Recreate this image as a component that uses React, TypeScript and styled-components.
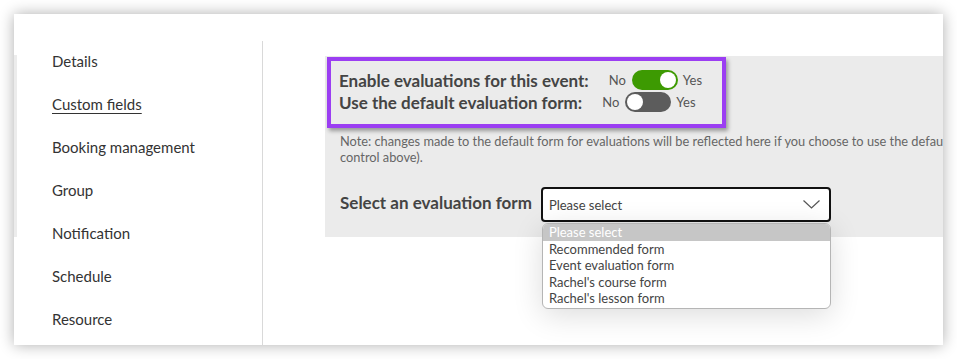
import React from "react";
import styled, { createGlobalStyle } from "styled-components";

const Global = createGlobalStyle`
  html, body { margin: 0; padding: 0; background: #ffffff; }
  body { font-family: Lato, "Open Sans", sans-serif; }
  * { box-sizing: border-box; }
`;

const Page = styled.div`
  width: 957px;
  height: 359px;
  padding: 14px 14px 14px 14px;
  overflow: hidden;
`;

const Card = styled.div`
  width: 929px;
  height: 331px;
  background: #ffffff;
  box-shadow: 0 0 14px rgba(0, 0, 0, 0.32);
  display: flex;
  overflow: hidden;
`;

const EdgeStrip = styled.div`
  flex: 0 0 3px;
  margin-top: 41px;
  height: 182px;
  background: #ececec;
`;

const Nav = styled.nav`
  flex: 0 0 245px;
  padding: 26px 0 0 35px;
  display: flex;
  flex-direction: column;
`;

const NavItem = styled.a<{ $active?: boolean }>`
  display: block;
  height: 43px;
  line-height: 43px;
  font-size: 15px;
  color: #333333;
  text-decoration: ${(p) => (p.$active ? "underline" : "none")};
  text-underline-offset: 3px;
  text-decoration-thickness: 1px;
`;

const Divider = styled.div`
  flex: 0 0 1px;
  margin-top: 27px;
  background: #d9d9d9;
`;

const Content = styled.div`
  flex: 1;
  min-width: 0;
  padding: 42px 0 0 62px;
`;

const Panel = styled.div`
  width: 720px;
  background: #ebebeb;
  padding: 1px 0 15px 2px;
`;

const Highlight = styled.div`
  width: 399px;
  border: 4px solid #9b3ef2;
  padding: 8px 8px 11px 8px;
  box-shadow: 2px 3px 4px rgba(0, 0, 0, 0.35);
`;

const Row = styled.div`
  display: flex;
  align-items: center;
  height: 22px;
`;

const Label = styled.span`
  font-size: 17px;
  font-weight: 700;
  color: #444444;
  white-space: nowrap;
`;

const SwitchGroup = styled.div`
  display: flex;
  align-items: center;
  margin-left: 20px;
  font-size: 13px;
  color: #555555;
`;

const Toggle = styled.span<{ $on: boolean }>`
  position: relative;
  display: inline-block;
  width: 46px;
  height: 20px;
  border-radius: 10px;
  margin: 0 5px 0 6px;
  background: ${(p) => (p.$on ? "#3d9a02" : "#5c5c5c")};
  &::after {
    content: "";
    position: absolute;
    top: 2px;
    left: ${(p) => (p.$on ? "28px" : "2px")};
    width: 16px;
    height: 16px;
    border-radius: 50%;
    background: #ffffff;
  }
`;

const Note = styled.p`
  margin: 5px 0 0 0;
  padding-left: 13px;
  font-size: 12.8px;
  line-height: 16px;
  color: #666666;
  width: 718px;
`;

const SelectRow = styled.div`
  display: flex;
  align-items: center;
  margin-top: 22px;
  padding-left: 13px;
`;

const SelectLabel = styled.span`
  font-size: 17px;
  font-weight: 700;
  color: #444444;
  margin-right: 9px;
  margin-top: -5px;
  white-space: nowrap;
`;

const SelectWrap = styled.div`
  position: relative;
  width: 290px;
`;

const SelectBox = styled.div`
  height: 35px;
  border: 2px solid #111111;
  border-radius: 4px;
  background: #ffffff;
  display: flex;
  align-items: center;
  justify-content: space-between;
  padding: 0 6px 0 6px;
  font-size: 13px;
  color: #444444;
`;

const Chevron = styled.svg`
  width: 17px;
  height: 9px;
  margin-right: 3px;
`;

const Menu = styled.ul`
  position: absolute;
  top: calc(100% + 1px);
  left: 1px;
  right: 0;
  margin: 0;
  padding: 0 0 1px 0;
  list-style: none;
  background: #ffffff;
  border: 1px solid #b5b5b5;
  border-radius: 6px;
  overflow: hidden;
  box-shadow: 0 6px 30px rgba(0, 0, 0, 0.14);
`;

const MenuItem = styled.li<{ $selected?: boolean }>`
  height: 16.6px;
  line-height: 16.6px;
  padding-left: 6px;
  font-size: 13px;
  color: ${(p) => (p.$selected ? "#ffffff" : "#444444")};
  background: ${(p) => (p.$selected ? "#c6c6c6" : "transparent")};
`;

const navItems = [
  "Details",
  "Custom fields",
  "Booking management",
  "Group",
  "Notification",
  "Schedule",
  "Resource",
];

const options = [
  "Please select",
  "Recommended form",
  "Event evaluation form",
  "Rachel's course form",
  "Rachel's lesson form",
];

export default function App() {
  return (
    <>
      <Global />
      <Page>
        <Card>
          <EdgeStrip />
          <Nav>
            {navItems.map((n) => (
              <NavItem key={n} $active={n === "Custom fields"}>
                {n}
              </NavItem>
            ))}
          </Nav>
          <Divider />
          <Content>
            <Panel>
              <Highlight>
                <Row>
                  <Label>Enable evaluations for this event:</Label>
                  <SwitchGroup>
                    No
                    <Toggle $on={true} />
                    Yes
                  </SwitchGroup>
                </Row>
                <Row>
                  <Label>Use the default evaluation form:</Label>
                  <SwitchGroup>
                    No
                    <Toggle $on={false} />
                    Yes
                  </SwitchGroup>
                </Row>
              </Highlight>
              <Note>
                Note: changes made to the default form for evaluations will be
                reflected here if you choose to use the default form (see
                control above).
              </Note>
              <SelectRow>
                <SelectLabel>Select an evaluation form</SelectLabel>
                <SelectWrap>
                  <SelectBox>
                    Please select
                    <Chevron viewBox="0 0 17 9">
                      <path
                        d="M0.5 0.5 L8.5 8 L16.5 0.5"
                        fill="none"
                        stroke="#555"
                        strokeWidth="1.2"
                      />
                    </Chevron>
                  </SelectBox>
                  <Menu>
                    {options.map((o, i) => (
                      <MenuItem key={o} $selected={i === 0}>
                        {o}
                      </MenuItem>
                    ))}
                  </Menu>
                </SelectWrap>
              </SelectRow>
            </Panel>
          </Content>
        </Card>
      </Page>
    </>
  );
}
